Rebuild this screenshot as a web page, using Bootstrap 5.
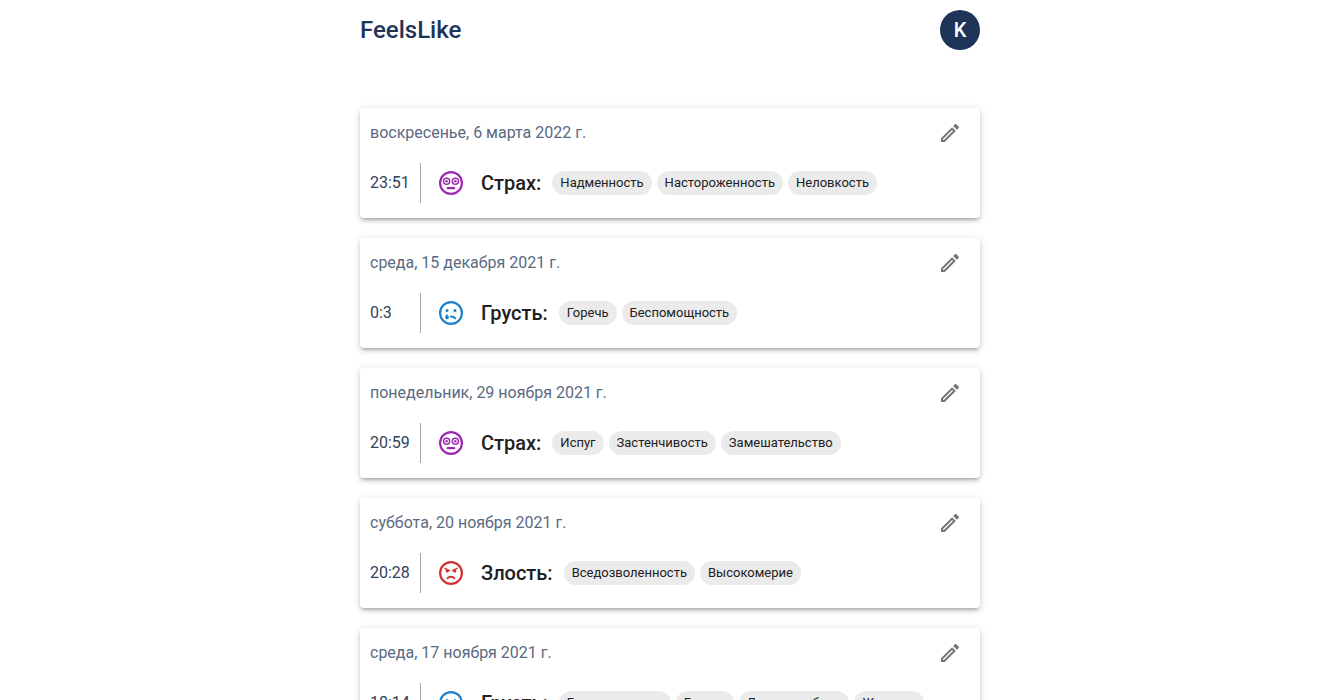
<!DOCTYPE html>
<html lang="ru">
<head>
<meta charset="utf-8">
<meta name="viewport" content="width=device-width, initial-scale=1">
<title>FeelsLike</title>
<link href="https://cdn.jsdelivr.net/npm/bootstrap@5.3.0/dist/css/bootstrap.min.css" rel="stylesheet">
<style>
body { font-family: Roboto, "Liberation Sans", sans-serif; color: #212121; background: #fff; }
::-webkit-scrollbar { display: none; }
.page { max-width: 620px; }
.topbar { height: 60px; margin-bottom: 48px; }
.brand { font-size: 24px; line-height: 32px; font-weight: 500; color: #1e3559; }
.avatar { width: 40px; height: 40px; background: #1e3559; font-size: 20px; line-height: 40px; font-weight: 500; }
.entries { gap: 20px; padding-bottom: 20px; }
.entry { padding: 10px 10px 15px; border-radius: 4px; background: #fff;
  box-shadow: 0 3px 3px -2px rgba(0,0,0,.2), 0 3px 4px 0 rgba(0,0,0,.14), 0 1px 8px 0 rgba(0,0,0,.12); }
.date { font-size: 16px; line-height: 30px; color: #5a6a82; }
.edit { width: 40px; height: 30px; color: #757575; }
.edit svg { width: 24px; height: 24px; fill: currentColor; }
.feeling { margin-top: 15px; }
.time { width: 51px; line-height: 40px; border-right: 1px solid #a5a5ad; font-size: 16px; color: #33415a; }
.mood { width: 24px; height: 24px; margin: 0 18px; }
.mood-title { font-size: 20px; line-height: 32px; font-weight: 500; margin-right: 11px; }
.tags { gap: 5px; }
.tag { line-height: 24px; padding: 0 8px; border-radius: 12px; background: #ebebeb; font-size: 13px; }
.fear { color: #9c27b0; }
.sad { color: #1e80cc; }
.anger { color: #d32f2f; }
</style>
</head>
<body>
<svg class="d-none" aria-hidden="true">
  <symbol id="pen" viewBox="0 0 24 24"><path d="M14.06 9.02l.92.92L5.92 19H5v-.92l9.06-9.06M17.66 3c-.25 0-.51.1-.7.29l-1.83 1.83 3.75 3.75 1.83-1.83c.39-.39.39-1.02 0-1.41l-2.34-2.34c-.2-.2-.45-.29-.71-.29zm-3.6 3.19L3 17.25V21h3.75L17.81 9.94l-3.75-3.75z"/></symbol>
  <symbol id="fear" viewBox="0 0 24 24"><g fill="none" stroke="currentColor"><circle cx="12" cy="12" r="10.9" stroke-width="2.2"/><circle cx="7.6" cy="10.3" r="3.1" stroke-width="1.4"/><circle cx="16.4" cy="10.3" r="3.1" stroke-width="1.4"/><path d="M8.8 17.2h6.4" stroke-width="2.3" stroke-linecap="round"/></g><circle cx="7.6" cy="10.3" r="1.2" fill="currentColor"/><circle cx="16.4" cy="10.3" r="1.2" fill="currentColor"/></symbol>
  <symbol id="sad" viewBox="0 0 24 24"><circle cx="12" cy="12" r="10.9" fill="none" stroke="currentColor" stroke-width="2.2"/><g fill="currentColor"><circle cx="8" cy="9.5" r="1.5"/><circle cx="16" cy="9.5" r="1.5"/><path d="M8 13c1 1.4 1.9 2.4 1.9 3.4a1.9 1.9 0 0 1-3.8 0c0-1 .9-2 1.9-3.4z"/></g><path d="M12 15.4c1.8 0 3.3.6 4.3 1.9" fill="none" stroke="currentColor" stroke-width="2" stroke-linecap="round"/></symbol>
  <symbol id="anger" viewBox="0 0 24 24"><g fill="none" stroke="currentColor" stroke-linecap="round"><circle cx="12" cy="12" r="10.9" stroke-width="2.2"/><path d="M6 7.4l4.4 2.2M18 7.4l-4.4 2.2" stroke-width="1.5"/><path d="M8.6 17.2c1.7-2 5.1-2 6.8 0" stroke-width="2"/></g><circle cx="8.2" cy="9.9" r="1.6" fill="currentColor"/><circle cx="15.8" cy="9.9" r="1.6" fill="currentColor"/></symbol>
</svg>
<div class="page mx-auto">
  <header class="topbar d-flex align-items-center justify-content-between">
    <a href="#" class="brand text-decoration-none">FeelsLike</a>
    <button type="button" class="avatar rounded-circle border-0 p-0 text-white" aria-label="Профиль">K</button>
  </header>
  <main class="entries d-grid">
    <article class="entry">
      <div class="d-flex justify-content-between"><time class="date">воскресенье, 6 марта 2022 г.</time><button type="button" class="edit btn border-0 p-0 d-flex align-items-center justify-content-center" aria-label="Изменить"><svg><use href="#pen"/></svg></button></div>
      <div class="feeling d-flex align-items-center"><div class="time">23:51</div><svg class="mood fear"><use href="#fear"/></svg><div class="mood-title">Страх:</div><div class="tags d-flex"><span class="tag">Надменность</span><span class="tag">Настороженность</span><span class="tag">Неловкость</span></div></div>
    </article>
    <article class="entry">
      <div class="d-flex justify-content-between"><time class="date">среда, 15 декабря 2021 г.</time><button type="button" class="edit btn border-0 p-0 d-flex align-items-center justify-content-center" aria-label="Изменить"><svg><use href="#pen"/></svg></button></div>
      <div class="feeling d-flex align-items-center"><div class="time">0:3</div><svg class="mood sad"><use href="#sad"/></svg><div class="mood-title">Грусть:</div><div class="tags d-flex"><span class="tag">Горечь</span><span class="tag">Беспомощность</span></div></div>
    </article>
    <article class="entry">
      <div class="d-flex justify-content-between"><time class="date">понедельник, 29 ноября 2021 г.</time><button type="button" class="edit btn border-0 p-0 d-flex align-items-center justify-content-center" aria-label="Изменить"><svg><use href="#pen"/></svg></button></div>
      <div class="feeling d-flex align-items-center"><div class="time">20:59</div><svg class="mood fear"><use href="#fear"/></svg><div class="mood-title">Страх:</div><div class="tags d-flex"><span class="tag">Испуг</span><span class="tag">Застенчивость</span><span class="tag">Замешательство</span></div></div>
    </article>
    <article class="entry">
      <div class="d-flex justify-content-between"><time class="date">суббота, 20 ноября 2021 г.</time><button type="button" class="edit btn border-0 p-0 d-flex align-items-center justify-content-center" aria-label="Изменить"><svg><use href="#pen"/></svg></button></div>
      <div class="feeling d-flex align-items-center"><div class="time">20:28</div><svg class="mood anger"><use href="#anger"/></svg><div class="mood-title">Злость:</div><div class="tags d-flex"><span class="tag">Вседозволенность</span><span class="tag">Высокомерие</span></div></div>
    </article>
    <article class="entry">
      <div class="d-flex justify-content-between"><time class="date">среда, 17 ноября 2021 г.</time><button type="button" class="edit btn border-0 p-0 d-flex align-items-center justify-content-center" aria-label="Изменить"><svg><use href="#pen"/></svg></button></div>
      <div class="feeling d-flex align-items-center"><div class="time">18:14</div><svg class="mood sad"><use href="#sad"/></svg><div class="mood-title">Грусть:</div><div class="tags d-flex"><span class="tag">Безнадежность</span><span class="tag">Горечь</span><span class="tag">Душевная боль</span><span class="tag">Жалость</span></div></div>
    </article>
  </main>
</div>
<script src="https://cdn.jsdelivr.net/npm/bootstrap@5.3.0/dist/js/bootstrap.bundle.min.js"></script>
</body>
</html>
